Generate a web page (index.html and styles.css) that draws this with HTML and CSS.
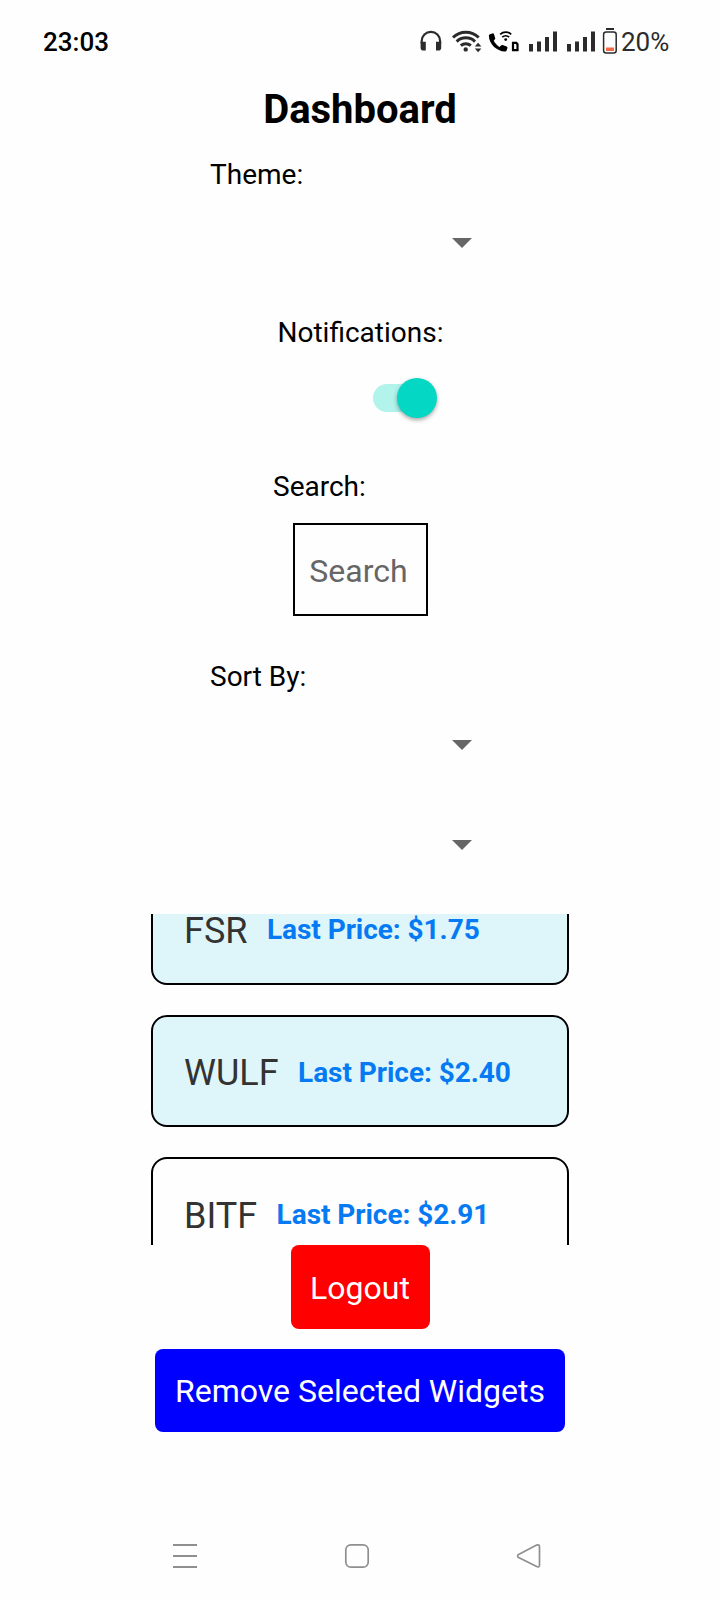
FILE: index.html
```html
<!DOCTYPE html>
<html lang="en">
<head>
<meta charset="utf-8">
<title>Dashboard</title>
<link rel="stylesheet" href="styles.css">
</head>
<body>
<header class="status">
  <span class="time">23:03</span>
  <svg class="status-icons" width="208" height="45" viewBox="0 0 208 45" fill="none" stroke="#2b2b2b">
    <!-- headphones -->
    <path d="M11.700 23.500v-2.500a9.200 9.200 0 0 1 18.400 0v2.500" stroke-width="2.200"/>
    <path d="M10.600 21.800h5.200v8.800h-2.400a2.800 2.800 0 0 1-2.800-2.800zM26 21.800h5.200v6a2.800 2.800 0 0 1-2.800 2.800h-2.400z" fill="#2b2b2b" stroke="none"/>
    <!-- wifi -->
    <path d="M43 17.500a18.500 18.500 0 0 1 25.700 0M46.700 21.600a13 13 0 0 1 18.300 0M50.800 25.600a7.500 7.500 0 0 1 10 0" stroke-width="3"/>
    <path d="M55.700 27.200a2.200 2.200 0 1 1 0 4.400a2.200 2.200 0 0 1 0-4.400zM64.800 26.500l3.300-3.700l3.300 3.700zM64.800 28.500h6.600l-3.300 3.700z" fill="#2b2b2b" stroke="none"/>
    <!-- wifi call -->
    <path transform="translate(76.500 10.500)" d="M7.200 10.300c1.400 2.500 3 4.400 5.600 6.100l2.200-1.700c.4-.3.800-.4 1.200-.2l3.900 1.600c.8.300 1 .9.800 1.600l-.8 2.200c-.3.800-.8 1.100-1.600 1.100C10 20.600 2.600 13.400 2.400 5.400c0-.9.300-1.400 1.100-1.700l2.400-.8c.8-.2 1.300 0 1.600.8l1.200 3.700c.2.500 0 .9-.3 1.300z" fill="#000" stroke="none"/>
    <path d="M90.200 14.300a8 8 0 0 1 11 0M92.300 17.100a5 5 0 0 1 6.800 0" stroke="#000" stroke-width="1.700"/>
    <circle cx="95.700" cy="19.600" r="1.400" fill="#000" stroke="none"/>
    <path d="M103 22.900h3.300l1.200 1.300v5.900h-4.500z" stroke="#000" stroke-width="2.200"/>
    <!-- signal strength, both SIMs -->
    <path d="M121 24v7.500M129 21.500v10M137 17v14.500M145 11.500v20M159 24v7.500M167 21.500v10M175 17v14.500M183 11.500v20" stroke-width="4"/>
    <!-- battery -->
    <path d="M196 9h8" stroke-width="2"/>
    <rect x="193.600" y="12" width="12.600" height="21" rx="2.500" stroke-width="1.500"/>
    <path d="M196 27.500h8v3.500h-8z" fill="#f26a45" stroke="none"/>
  </svg>
  <span class="battery">20%</span>
</header>

<main class="dashboard">
  <h1 class="title">Dashboard</h1>

  <section class="field">
    <div class="label">Theme:</div>
    <div class="picker"><span class="caret"></span></div>
  </section>

  <section class="notifications">
    <div class="label">Notifications:</div>
    <div class="switch"><span class="track"><span class="thumb"></span></span></div>
  </section>

  <section class="search">
    <div class="label">Search:</div>
    <div class="search-box">Search</div>
  </section>

  <section class="field sort">
    <div class="label">Sort By:</div>
    <div class="picker"><span class="caret"></span></div>
    <div class="picker"><span class="caret"></span></div>
  </section>

  <div class="list">
    <article class="card selected"><span class="symbol">FSR</span><span class="price">Last Price: $1.75</span></article>
    <article class="card selected"><span class="symbol">WULF</span><span class="price">Last Price: $2.40</span></article>
    <article class="card"><span class="symbol">BITF</span><span class="price">Last Price: $2.91</span></article>
  </div>

  <div class="button logout">Logout</div>
  <div class="button remove">Remove Selected Widgets</div>
</main>

<nav class="navbar">
  <svg width="28" height="28" viewBox="0 0 28 28" fill="none" stroke="#8f8f8f" stroke-width="2"><path d="M2 3h24M2 14h24M2 25h24"/></svg>
  <svg width="28" height="28" viewBox="0 0 28 28" fill="none" stroke="#8f8f8f" stroke-width="1.700"><rect x="2.800" y="2.800" width="22.400" height="22.400" rx="5"/></svg>
  <svg width="28" height="28" viewBox="0 0 28 28" fill="none" stroke="#8f8f8f" stroke-width="1.700" stroke-linejoin="round"><path d="M3.600 12.400L21.700 3.100Q24.500 2.100 24.500 5v18Q24.500 25.900 21.700 24.600L3.600 15.500Q1.600 13.900 3.600 12.400z"/></svg>
</nav>
</body>
</html>
```
FILE: styles.css
```css
* { box-sizing: border-box; }

body {
  margin: 0;
  height: 1600px;
  display: flex;
  flex-direction: column;
  background: #fefefe;
  color: #000;
  font-family: Roboto, sans-serif;
  overflow: hidden;
}

.status {
  flex: none;
  display: flex;
  align-items: center;
  height: 83px;
  padding: 1px 49px 0 43px;
  font-size: 26px;
  line-height: 44px;
}

.time { font-weight: 500; margin-right: auto; }
.status-icons { display: block; }
.battery { width: 50px; margin-left: 3px; color: #2b2b2b; white-space: nowrap; }

.dashboard {
  display: flex;
  flex-direction: column;
  align-items: center;
}

.title {
  margin: 0 0 18px;
  font-size: 40px;
  line-height: 54px;
  font-weight: 700;
}

.label { padding-top: 2px; font-size: 28px; line-height: 36px; }

.field { width: 300px; }

.picker {
  height: 100px;
  display: flex;
  align-items: center;
  justify-content: flex-end;
  padding-right: 38px;
}

.caret {
  border: 10px solid transparent;
  border-top-color: #666;
  border-bottom: 0;
}

.notifications { margin: 20px 0 0 1px; }

.switch {
  display: flex;
  justify-content: flex-end;
  padding: 33px 6px 0 0;
}

.track {
  display: flex;
  align-items: center;
  justify-content: flex-end;
  width: 64px;
  height: 28px;
  border-radius: 14px;
  background: linear-gradient(90deg, #b2f3ec 44px, transparent 44px);
}

.thumb {
  flex: none;
  width: 40px;
  height: 40px;
  border-radius: 50%;
  background: #04d7c4;
  box-shadow: 0 2px 4px rgba(0, 0, 0, .35);
}

.search { margin-top: 55px; width: 174px; }

.search-box {
  width: 135px;
  height: 93px;
  margin: 18px 0 0 20px;
  padding-right: 4px;
  border: 2px solid #000;
  color: #666;
  font-size: 32px;
  line-height: 92px;
  text-align: center;
}

.sort { margin-top: 41px; }

.list {
  width: 418px;
  height: 331px;
  margin-top: 19px;
  overflow: hidden;
  display: flex;
  flex-direction: column;
  justify-content: flex-start;
  gap: 30px;
}

.card {
  flex: none;
  display: flex;
  align-items: flex-start;
  height: 112.5px;
  padding: 32.5px 31px 0;
  border: 2px solid #000;
  border-radius: 16px;
  white-space: nowrap;
}

/* the list is scrolled part of the way through its first card */
.card:first-child { margin-top: -42px; }
.selected { background: #def6f9; }
.symbol { font-size: 36px; line-height: 48px; color: #333; }
.price { margin: 4.5px 0 0 19.5px; font-size: 28px; line-height: 38px; font-weight: 700; color: #057af3; letter-spacing: -.05px; }

.button {
  border-radius: 8px;
  color: #fff;
  font-size: 32px;
  height: 84px;
  line-height: 86px;
  text-align: center;
  white-space: nowrap;
}

.logout { width: 139px; background: #f00; }
.remove { width: 410px; height: 83px; margin-top: 20px; background: #00f; line-height: 84px; }

.navbar {
  display: flex;
  justify-content: space-between;
  margin-top: auto;
  padding: 0 177px 30px 171px;
}
```
